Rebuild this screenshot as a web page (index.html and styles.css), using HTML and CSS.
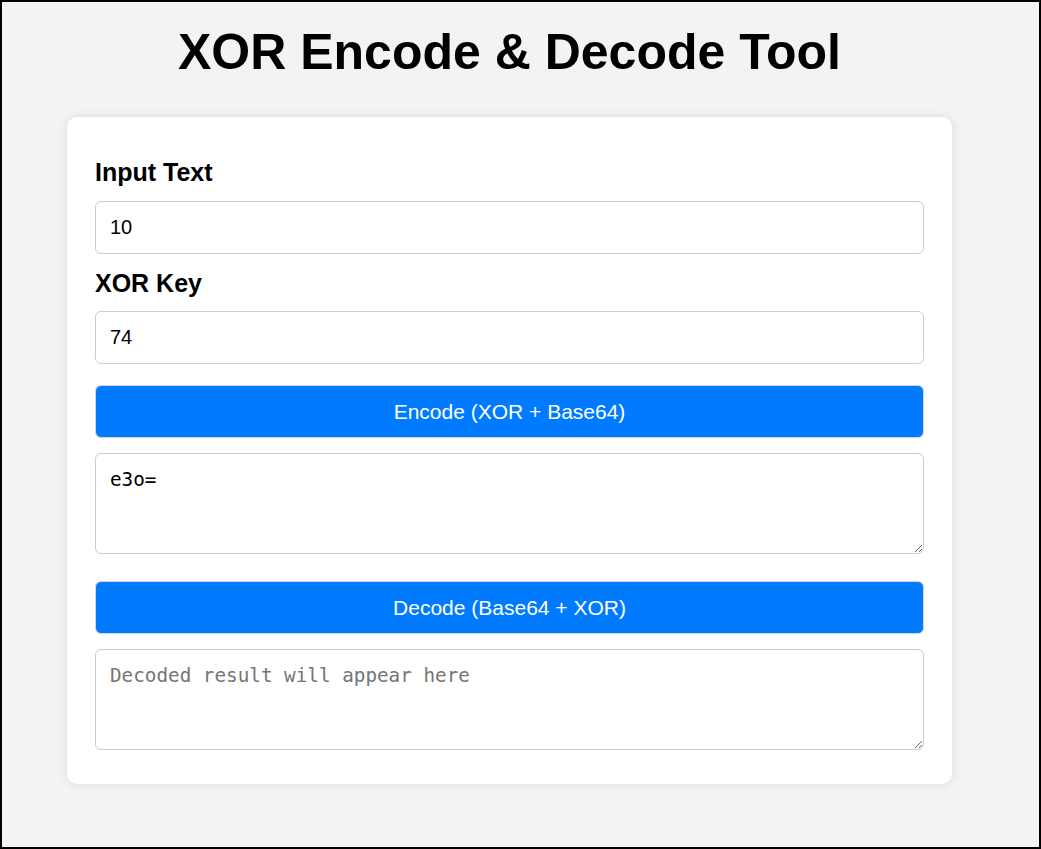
FILE: index.html
```html
<!DOCTYPE html>
<html lang="en">
<head>
<meta charset="utf-8">
<title>XOR Encode &amp; Decode Tool</title>
<link rel="stylesheet" href="styles.css">
</head>
<body>
<div class="frame">
  <h1 class="title">XOR Encode &amp; Decode Tool</h1>
  <div class="card">
    <label class="label" for="inputText">Input Text</label>
    <input class="field" id="inputText" type="text" value="10">
    <label class="label label-key" for="xorKey">XOR Key</label>
    <input class="field" id="xorKey" type="text" value="74">
    <button class="btn btn-encode" type="button">Encode (XOR + Base64)</button>
    <textarea class="area">e3o=</textarea>
    <button class="btn btn-decode" type="button">Decode (Base64 + XOR)</button>
    <textarea class="area" placeholder="Decoded result will appear here"></textarea>
  </div>
</div>
</body>
</html>
```

FILE: styles.css
```css
html, body {
  margin: 0;
  padding: 0;
}
body {
  font-family: "Liberation Sans", Arial, sans-serif;
  background: #f4f4f4;
}
.frame {
  box-sizing: border-box;
  height: 849px;
  border: 2px solid #000;
  padding: 0 22px 0 0;
  background: #f3f3f3;
}
.title {
  margin: 23px 0 0;
  font-size: 50px;
  font-weight: bold;
  text-align: center;
  color: #000;
  line-height: 55px;
}
.card {
  box-sizing: border-box;
  width: 885px;
  margin: 37px auto 0;
  background: #fff;
  border-radius: 10px;
  box-shadow: 0 0 10px rgba(0, 0, 0, 0.1);
  padding: 41px 28px 34px;
  display: flex;
  flex-direction: column;
}
.label {
  display: block;
  font-size: 25px;
  font-weight: bold;
  line-height: 29px;
  color: #000;
  margin-bottom: 14px;
}
.label-key {
  margin-top: 15px;
  margin-bottom: 13px;
}
.field {
  box-sizing: border-box;
  width: 100%;
  height: 53px;
  padding: 0 14px;
  font-family: "Liberation Sans", Arial, sans-serif;
  font-size: 20px;
  color: #000;
  border: 1px solid #ccc;
  border-radius: 6px;
  background: #fff;
  outline: none;
}
.btn {
  box-sizing: border-box;
  width: 100%;
  height: 53px;
  border: 1px solid #d6d6d6;
  border-radius: 6px;
  background: #007bff;
  color: #fff;
  font-family: "Liberation Sans", Arial, sans-serif;
  font-size: 21px;
  cursor: pointer;
}
.btn-encode {
  margin-top: 21px;
}
.btn-decode {
  margin-top: 27px;
}
.area {
  box-sizing: border-box;
  width: 100%;
  height: 101px;
  margin-top: 15px;
  padding: 14px 14px;
  font-family: "DejaVu Sans Mono", monospace;
  font-size: 19.3px;
  line-height: 24px;
  color: #000;
  border: 1px solid #ccc;
  border-radius: 6px;
  background: #fff;
  resize: vertical;
  outline: none;
}
.area::placeholder {
  color: #757575;
}
```
